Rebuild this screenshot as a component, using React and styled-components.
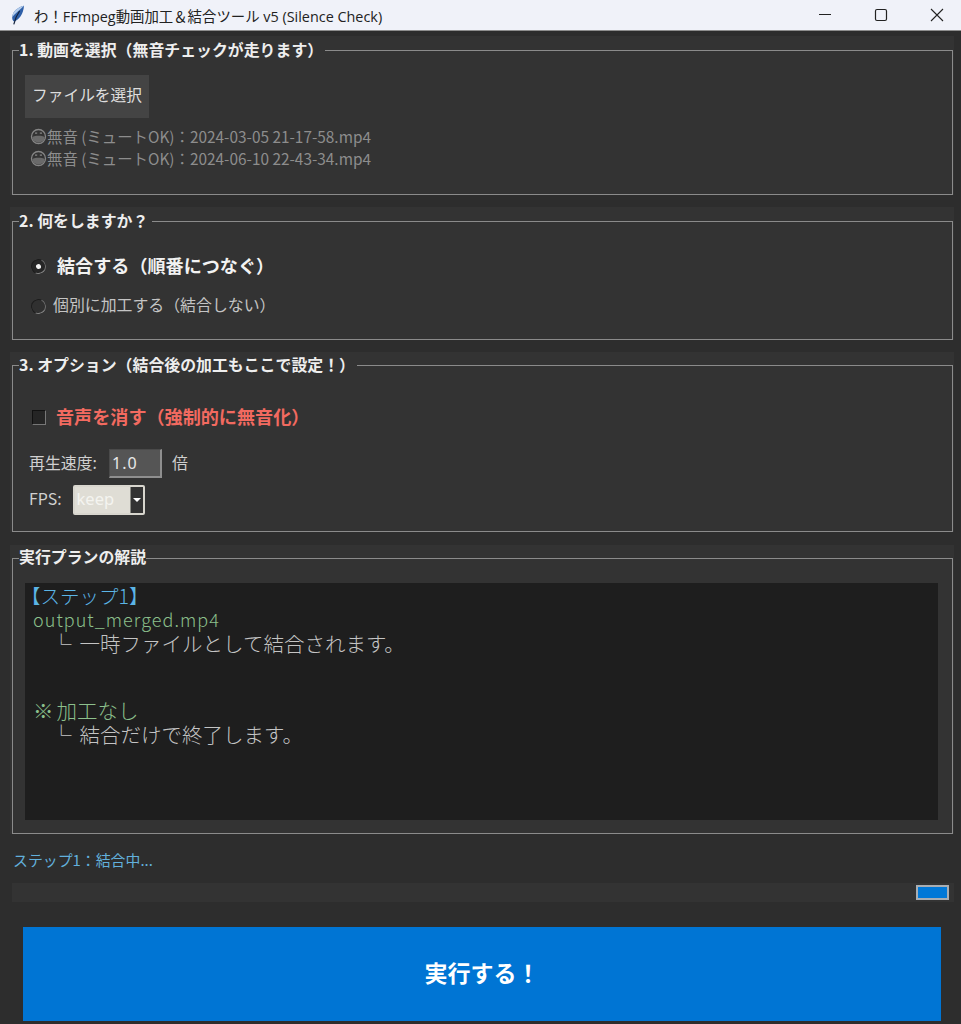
import React from "react";
import styled, { createGlobalStyle } from "styled-components";

const CJK = `"Noto Sans CJK JP", "Noto Sans", sans-serif`;
const UI = `"Noto Sans", "Noto Sans CJK JP", sans-serif`;

const Global = createGlobalStyle`
  html, body { margin: 0; padding: 0; height: 1024px; overflow: hidden; background: #2d2d2d; }
  * { box-sizing: border-box; }
`;

const Page = styled.div`
  width: 961px;
  height: 1024px;
  overflow: hidden;
  background: #2d2d2d;
  font-family: ${UI};
`;

const TitleBar = styled.header`
  height: 31px;
  background: #f0f2f9;
  border-bottom: 1px solid #8e8e8e;
  display: flex;
  align-items: center;
  padding-left: 11px;
`;
const TitleText = styled.span`
  margin-left: 9px;
  font: 14.4px ${`"Open Sans", "Noto Sans CJK JP", sans-serif`};
  color: #222;
  white-space: nowrap;
`;
const WindowControls = styled.div`
  margin-left: auto;
  margin-right: -4px;
  display: flex;
`;
const WindowButton = styled.span`
  width: 56px;
  height: 30px;
  display: flex;
  align-items: center;
  justify-content: center;
  color: #222;
`;

const Main = styled.main`
  padding: 5px 7px 0 10px;
  display: flex;
  flex-direction: column;
`;

const Frame = styled.section`
  position: relative;
  background: #333;
  padding-top: ${(p) => p.$top || 14}px;
  margin-bottom: ${(p) => p.$gap ?? 12}px;
  height: ${(p) => p.$height}px;
`;
const FrameBox = styled.div`
  height: 100%;
  margin: 0 1px 0 2px;
  border: 1px solid #8b8b8b;
  padding: ${(p) => p.$pad};
`;
const Legend = styled.h2`
  position: absolute;
  left: 9px;
  top: ${(p) => p.$top || 4}px;
  margin: 0;
  padding-right: ${(p) => p.$tail ?? 2}px;
  background: #333;
  font: 700 15.9px/20px ${CJK};
  color: #eee;
  white-space: nowrap;
`;

const PickButton = styled.div`
  width: 124px;
  height: 43px;
  background: #444;
  color: #ddd;
  font: 15.7px/40px ${CJK};
  text-align: center;
`;
const FileList = styled.ul`
  list-style: none;
  margin: 7px 0 0 5px;
  padding: 0;
`;
const FileRow = styled.li`
  display: flex;
  align-items: center;
  height: 22px;
  font: 15.4px/22px ${CJK};
  color: #8d8d8d;
  white-space: nowrap;
`;

const Option = styled.div`
  display: flex;
  align-items: center;
  height: 24px;
  margin-bottom: ${(p) => p.$mb || 0}px;
`;
const Radio = styled.span`
  width: 15px;
  height: 15px;
  border-radius: 50%;
  background: ${(p) => (p.$on ? "#262626" : "#303030")};
  border: 1.5px solid #1c1c1c;
  border-bottom-color: #858585;
  border-right-color: #6e6e6e;
  display: flex;
  align-items: center;
  justify-content: center;
  margin-left: 18px;
  margin-right: ${(p) => p.$gap}px;
  transform: rotate(-20deg);
  &::after {
    content: "";
    width: 5px;
    height: 5px;
    border-radius: 50%;
    background: ${(p) => (p.$on ? "#f2f2f2" : "transparent")};
  }
`;
const OptionText = styled.span`
  font: ${(p) => (p.$bold ? "700 18.1px" : "400 15.9px")} / 24px ${CJK};
  color: ${(p) => p.$color || (p.$bold ? "#f2f2f2" : "#c4c4c4")};
  white-space: nowrap;
  position: relative;
  top: -1px;
`;
const Check = styled.span`
  width: 14px;
  height: 15px;
  margin: 0 10px 0 19px;
  background: #252525;
  border: 1px solid #111;
  border-bottom-color: #777;
  border-right-color: #777;
`;
const Field = styled.div`
  display: flex;
  align-items: center;
  margin-left: 16px;
  height: ${(p) => p.$h}px;
  margin-bottom: ${(p) => p.$mb || 0}px;
`;
const FieldLabel = styled.span`
  font: 15.9px/20px ${CJK};
  color: #d0d0d0;
  margin-left: ${(p) => p.$ml || 0}px;
  position: relative;
  top: -1px;
  white-space: nowrap;
`;
const NumberBox = styled.div`
  width: 53px;
  height: 29px;
  margin-left: 12px;
  background: #555;
  color: #e8e8e8;
  font: 16px/27px "Noto Sans", sans-serif;
  letter-spacing: 1px;
  padding-left: 2px;
  border: 1px solid #4a4a4a;
  border-bottom: 2px solid #8f8f8f;
  border-right: 2px solid #8f8f8f;
`;
const Combo = styled.div`
  display: flex;
  width: 72px;
  height: 30px;
  margin-left: 11px;
  border: 2px solid #d8d6ce;
  border-radius: 2px;
  background: #dfddd5;
  overflow: hidden;
`;
const ComboValue = styled.span`
  flex: 1;
  padding-left: 2px;
  color: #f4f4f0;
  font: 16.5px/24px "Noto Sans", sans-serif;
`;
const ComboArrow = styled.span`
  width: 13px;
  background: #333;
  border-left: 1px solid #8a8a84;
  display: flex;
  align-items: center;
  justify-content: center;
  &::after {
    content: "";
    border-left: 4px solid transparent;
    border-right: 4px solid transparent;
    border-top: 4px solid #fff;
  }
`;

const PlanText = styled.div`
  height: 237px;
  background: #1e1e1e;
  padding: 1px 0 0 0;
  font-family: "Noto Sans CJK JP", "Noto Sans", sans-serif;
  font-weight: 300;
`;
const PlanLine = styled.div`
  height: ${(p) => p.$h || 24}px;
  line-height: ${(p) => p.$h || 24}px;
  padding-left: ${(p) => p.$indent || 0}px;
  margin-left: ${(p) => p.$shift || 0}px;
  color: ${(p) => p.$color || "#c4c4c4"};
  font-size: ${(p) => p.$size || 20.5}px;
  letter-spacing: ${(p) => p.$track || 0}px;
  white-space: pre;
`;
const Branch = styled.span`
  margin-right: 8px;
`;
const Mark = styled.span`
  margin-right: 3px;
`;

const Status = styled.div`
  margin-top: 16px;
  margin-left: 3px;
  height: 22px;
  font: 14.9px/20px ${CJK};
  color: #62b0dc;
`;
const Track = styled.div`
  margin: 11px 0 0 2px;
  height: 19px;
  background: #333;
  display: flex;
  justify-content: flex-end;
  align-items: center;
  padding-right: 5px;
`;
const Thumb = styled.span`
  width: 33px;
  height: 15px;
  background: #0078d7;
  border: 2px solid #a8adb2;
`;
const RunButton = styled.div`
  margin: 25px 0 0 13px;
  width: 918px;
  height: 94px;
  background: #0075d4;
  color: #fff;
  font: 700 23px/90px ${CJK};
  text-align: center;
`;

const Feather = () => (
  <svg width="14" height="20" viewBox="0 0 14 20" aria-hidden="true">
    <path d="M13 0.8C7 2 1.6 6.6 1.2 12 1.1 14 1.6 15.6 3 16.6 8 15 12.4 9 13 0.8Z" fill="#2e5fa8" />
    <path d="M13 0.8C7 2 1.6 6.6 1.2 12 4.4 8.4 9 5 13 0.8Z" fill="#b4cdec" />
    <path d="M8.6 6C6 9.6 4 14 2.8 19.4" stroke="#14233d" strokeWidth="1.2" fill="none" />
  </svg>
);

const MaskFace = () => (
  <svg width="17" height="17" viewBox="0 0 17 17" aria-hidden="true" style={{ flex: "none" }}>
    <circle cx="8.5" cy="8.5" r="7" fill="none" stroke="#858585" strokeWidth="1.3" />
    <path d="M2.3 9C5 7.2 12 7.2 14.7 9L14 12C11.5 15.2 5.5 15.2 3 12Z" fill="#6a6a6a" />
    <path d="M5 5.2h2.2M9.8 5.2H12" stroke="#858585" strokeWidth="1.2" />
  </svg>
);

const Minimize = () => (
  <svg width="14" height="14" viewBox="0 0 14 14"><path d="M1 6.5h12" stroke="currentColor" strokeWidth="1" /></svg>
);
const Maximize = () => (
  <svg width="14" height="14" viewBox="0 0 14 14"><rect x="1.5" y="1.5" width="11" height="11" rx="1.5" fill="none" stroke="currentColor" strokeWidth="1.2" /></svg>
);
const Close = () => (
  <svg width="14" height="14" viewBox="0 0 14 14"><path d="M1 1l12 12M13 1L1 13" stroke="currentColor" strokeWidth="1.1" /></svg>
);

const files = ["2024-03-05 21-17-58.mp4", "2024-06-10 22-43-34.mp4"];

export default function App() {
  return (
    <Page>
      <Global />
      <TitleBar>
        <Feather />
        <TitleText>わ！FFmpeg動画加工＆結合ツール v5 (Silence Check)</TitleText>
        <WindowControls>
          <WindowButton><Minimize /></WindowButton>
          <WindowButton><Maximize /></WindowButton>
          <WindowButton><Close /></WindowButton>
        </WindowControls>
      </TitleBar>
      <Main>
        <Frame $height={159}>
          <Legend>1. 動画を選択（無音チェックが走ります）</Legend>
          <FrameBox $pad="24px 0 0 12px">
            <PickButton>ファイルを選択</PickButton>
            <FileList>
              {files.map((f) => (
                <FileRow key={f}><MaskFace />無音 (ミュートOK)：{f}</FileRow>
              ))}
            </FileList>
          </FrameBox>
        </Frame>
        <Frame $height={133}>
          <Legend $tail={4}>2. 何をしますか？</Legend>
          <FrameBox $pad="32px 0 0 0">
            <Option $mb={16}>
              <Radio $on $gap={11} />
              <OptionText $bold>結合する（順番につなぐ）</OptionText>
            </Option>
            <Option>
              <Radio $gap={7} />
              <OptionText>個別に加工する（結合しない）</OptionText>
            </Option>
          </FrameBox>
        </Frame>
        <Frame $height={180} $top={13} $gap={13}>
          <Legend $top={3}>3. オプション（結合後の加工もここで設定！）</Legend>
          <FrameBox $pad="39px 0 0 0">
            <Option $mb={20}>
              <Check />
              <OptionText $bold $color="#f26a60">音声を消す（強制的に無音化）</OptionText>
            </Option>
            <Field $h={29} $mb={7}>
              <FieldLabel>再生速度:</FieldLabel>
              <NumberBox>1.0</NumberBox>
              <FieldLabel $ml={10}>倍</FieldLabel>
            </Field>
            <Field $h={30}>
              <FieldLabel>FPS:</FieldLabel>
              <Combo>
                <ComboValue>keep</ComboValue>
                <ComboArrow />
              </Combo>
            </Field>
          </FrameBox>
        </Frame>
        <Frame $height={289} $top={13} $gap={0}>
          <Legend $top={2} $tail={0}>実行プランの解説</Legend>
          <FrameBox $pad="24px 14px 0 12px">
            <PlanText>
              <PlanLine $color="#5bb5e6" $shift={-4} $size={19.5} $h={23}>【ステップ1】</PlanLine>
              <PlanLine $color="#8cc08c" $indent={8} $size={18} $track={1.05}>output_merged.mp4</PlanLine>
              <PlanLine $indent={26}><Branch>└</Branch>一時ファイルとして結合されます。</PlanLine>
              <PlanLine $h={43} />
              <PlanLine $color="#8cc08c" $indent={8}><Mark>※</Mark>加工なし</PlanLine>
              <PlanLine $indent={26}><Branch>└</Branch>結合だけで終了します。</PlanLine>
            </PlanText>
          </FrameBox>
        </Frame>
        <Status>ステップ1：結合中...</Status>
        <Track><Thumb /></Track>
        <RunButton>実行する！</RunButton>
      </Main>
    </Page>
  );
}
